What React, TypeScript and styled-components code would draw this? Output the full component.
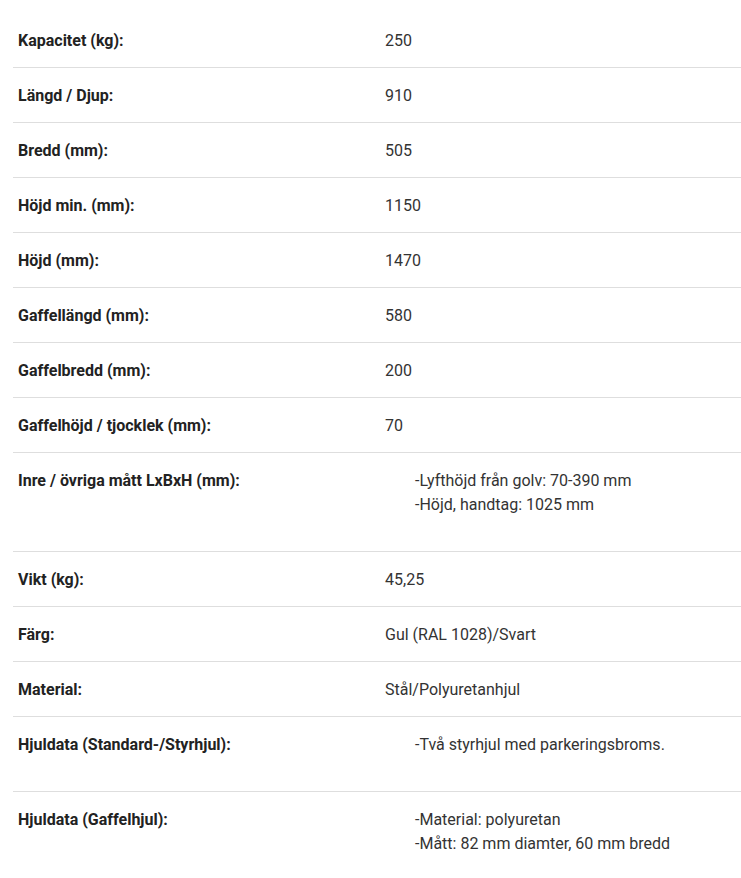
import styled, { createGlobalStyle } from "styled-components"

const GlobalStyle = createGlobalStyle`
  html, body {
    margin: 0;
    padding: 0;
    background: #ffffff;
  }
  body {
    font-family: Roboto, "Liberation Sans", Arial, sans-serif;
    color: #222222;
    -webkit-font-smoothing: antialiased;
  }
`

const Page = styled.div`
  padding: 13px 0 0 13px;
  width: 100%;
  box-sizing: border-box;
  overflow: hidden;
`

const Table = styled.div`
  display: flex;
  flex-direction: column;
  width: 728px;
`

const Row = styled.div`
  display: grid;
  grid-template-columns: 372px 1fr;
  border-bottom: 1px solid #dedede;
  &:last-child {
    border-bottom: 0 none;
  }
`

const Label = styled.div`
  padding: 17px 5px 15px;
  font-size: 16px;
  line-height: 22px;
  font-weight: 700;
  color: #222222;
`

const Value = styled.div`
  padding: 17px 5px 15px 0;
  font-size: 16px;
  line-height: 22px;
  color: #333333;
`

const List = styled.ul`
  list-style: none;
  margin: -1px 0 19px;
  padding: 0 0 0 30px;
  line-height: 24px;
`

interface Spec {
	label: string
	value: string | string[]
}

const specs: Spec[] = [
	{ label: "Kapacitet (kg):", value: "250" },
	{ label: "Längd / Djup:", value: "910" },
	{ label: "Bredd (mm):", value: "505" },
	{ label: "Höjd min. (mm):", value: "1150" },
	{ label: "Höjd (mm):", value: "1470" },
	{ label: "Gaffellängd (mm):", value: "580" },
	{ label: "Gaffelbredd (mm):", value: "200" },
	{ label: "Gaffelhöjd / tjocklek (mm):", value: "70" },
	{ label: "Inre / övriga mått LxBxH (mm):", value: ["-Lyfthöjd från golv: 70-390 mm", "-Höjd, handtag: 1025 mm"] },
	{ label: "Vikt (kg):", value: "45,25" },
	{ label: "Färg:", value: "Gul (RAL 1028)/Svart" },
	{ label: "Material:", value: "Stål/Polyuretanhjul" },
	{ label: "Hjuldata (Standard-/Styrhjul):", value: ["-Två styrhjul med parkeringsbroms."] },
	{ label: "Hjuldata (Gaffelhjul):", value: ["-Material: polyuretan", "-Mått: 82 mm diamter, 60 mm bredd"] },
]

function App() {
	return (
		<Page>
			<GlobalStyle />
			<Table>
				{specs.map((s) => (
					<Row key={s.label}>
						<Label>{s.label}</Label>
						<Value>
							{Array.isArray(s.value) ? (
								<List>
									{s.value.map((v) => <li key={v}>{v}</li>)}
								</List>
							) : s.value}
						</Value>
					</Row>
				))}
			</Table>
		</Page>
	)
}

export default App
